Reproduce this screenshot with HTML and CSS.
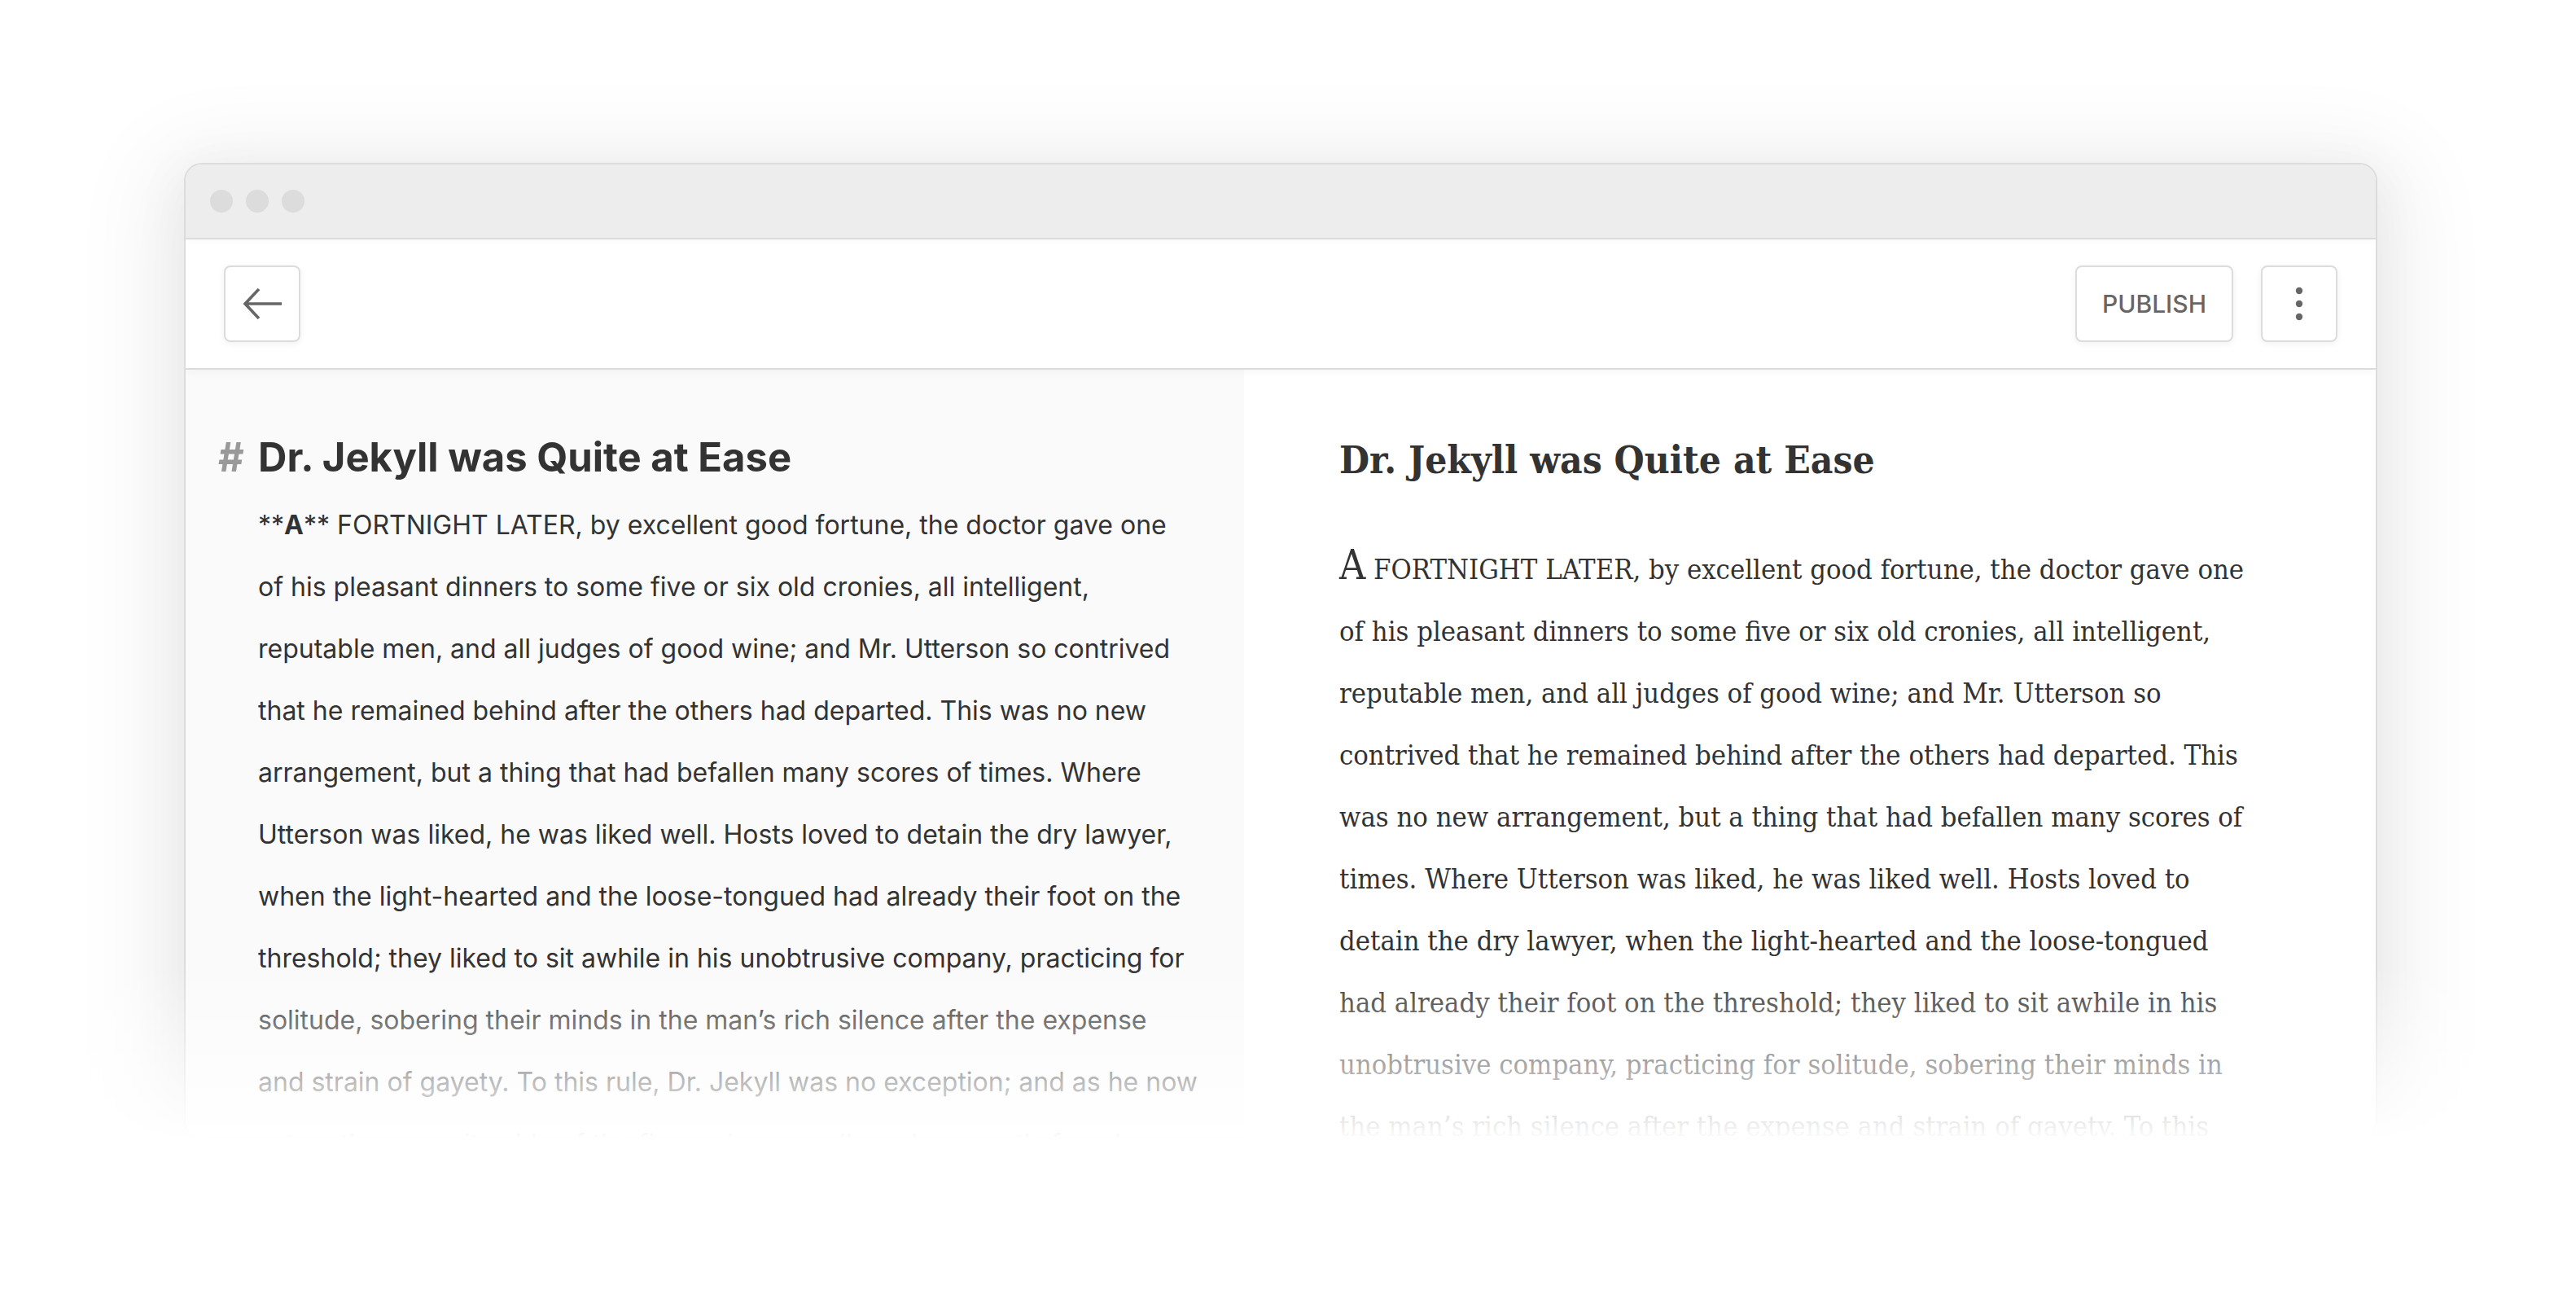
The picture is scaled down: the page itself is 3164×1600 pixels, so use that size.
FILE: index.html
```html
<!DOCTYPE html>
<html lang="en">
<head>
<meta charset="utf-8">
<title>Dr. Jekyll was Quite at Ease</title>
<link rel="stylesheet" href="styles.css">
</head>
<body>
<div class="stage">
  <div class="window">
    <div class="titlebar">
      <span class="dot"></span>
      <span class="dot"></span>
      <span class="dot"></span>
    </div>
    <div class="toolbar">
      <button class="btn btn-icon" aria-label="Back">
        <svg width="48" height="40" viewBox="0 0 48 40"><path d="M48 20H3M20 2L3 20L20 38" fill="none" stroke="#666" stroke-width="3.6"/></svg>
      </button>
      <div class="spacer"></div>
      <button class="btn btn-text">PUBLISH</button>
      <button class="btn btn-icon btn-more" aria-label="More">
        <svg width="10" height="42" viewBox="0 0 10 42"><circle cx="5" cy="5" r="4.2" fill="#666"/><circle cx="5" cy="21" r="4.2" fill="#666"/><circle cx="5" cy="37" r="4.2" fill="#666"/></svg>
      </button>
    </div>
    <div class="panes">
      <section class="editor">
        <h1 class="md-h1"><span class="md-hash">#</span><span>Dr. Jekyll was Quite at Ease</span></h1>
        <p class="md-body">**<b>A</b>** FORTNIGHT LATER, by excellent good fortune, the doctor gave one<br>of his pleasant dinners to some five or six old cronies, all intelligent,<br>reputable men, and all judges of good wine; and Mr. Utterson so contrived<br>that he remained behind after the others had departed. This was no new<br>arrangement, but a thing that had befallen many scores of times. Where<br>Utterson was liked, he was liked well. Hosts loved to detain the dry lawyer,<br>when the light-hearted and the loose-tongued had already their foot on the<br>threshold; they liked to sit awhile in his unobtrusive company, practicing for<br>solitude, sobering their minds in the man’s rich silence after the expense<br>and strain of gayety. To this rule, Dr. Jekyll was no exception; and as he now<br>sat on the opposite side of the fire—a large, well-made, smooth-faced man</p>
      </section>
      <article class="preview">
        <h1 class="pv-h1">Dr. Jekyll was Quite at Ease</h1>
        <p class="pv-body"><span class="drop">A</span> FORTNIGHT LATER, by excellent good fortune, the doctor gave one<br>of his pleasant dinners to some five or six old cronies, all intelligent,<br>reputable men, and all judges of good wine; and Mr. Utterson so<br>contrived that he remained behind after the others had departed. This<br>was no new arrangement, but a thing that had befallen many scores of<br>times. Where Utterson was liked, he was liked well. Hosts loved to<br>detain the dry lawyer, when the light-hearted and the loose-tongued<br>had already their foot on the threshold; they liked to sit awhile in his<br>unobtrusive company, practicing for solitude, sobering their minds in<br>the man’s rich silence after the expense and strain of gayety. To this</p>
      </article>
    </div>
  </div>
  <div class="fade"></div>
</div>
</body>
</html>
```

FILE: styles.css
```css
html, body {
  margin: 0;
  background: #ffffff;
}

.stage {
  position: relative;
  width: 3164px;
  height: 1600px;
  box-sizing: border-box;
  padding: 200px 0 0 226px;
  overflow: hidden;
}

.window {
  width: 2694px;
  height: 1198px;
  box-sizing: border-box;
  border: 2px solid #dcdcdc;
  border-radius: 22px;
  background: #ffffff;
  overflow: hidden;
  display: flex;
  flex-direction: column;
  box-shadow: 0 12px 60px 10px rgba(0, 0, 0, 0.045), 0 24px 110px 40px rgba(0, 0, 0, 0.06);
}

.titlebar {
  flex: 0 0 90px;
  background: #ededed;
  border-bottom: 2px solid #dcdcdc;
  display: flex;
  align-items: center;
  gap: 16px;
  padding-left: 30px;
  position: relative;
  z-index: 2;
  box-shadow: 0 2px 8px rgba(0, 0, 0, 0.03);
}

.dot {
  width: 28px;
  height: 28px;
  border-radius: 50%;
  background: #dcdcdc;
}

.toolbar {
  flex: 0 0 158px;
  display: flex;
  align-items: center;
  padding: 0 47px;
  background: #ffffff;
  border-bottom: 2px solid #dcdcdc;
  position: relative;
  z-index: 1;
  box-shadow: 0 3px 10px rgba(0, 0, 0, 0.035);
}

.spacer {
  flex: 1;
}

.btn {
  height: 94px;
  box-sizing: border-box;
  border: 2px solid #dcdcdc;
  border-radius: 8px;
  background: #ffffff;
  box-shadow: 0 2px 8px rgba(0, 0, 0, 0.06);
  display: flex;
  align-items: center;
  justify-content: center;
  padding: 0;
  margin: 0;
  cursor: pointer;
}

.btn-icon {
  width: 94px;
}

.btn-text {
  padding: 0 31px;
  font-family: Inter, "Liberation Sans", sans-serif;
  font-weight: 500;
  font-size: 30px;
  color: #666666;
}

.btn-more {
  margin-left: 34px;
}

.panes {
  flex: 1;
  display: flex;
  min-height: 0;
}

.editor {
  flex: 0 0 1300px;
  box-sizing: border-box;
  background: #fafafa;
  padding: 79px 0 0 89px;
  overflow: hidden;
}

.md-h1 {
  display: flex;
  margin: 0 0 0 -49px;
  font-family: Inter, "Liberation Sans", sans-serif;
  font-weight: 700;
  font-size: 49px;
  line-height: 58px;
  color: #333333;
}

.md-hash {
  width: 49px;
  color: #999999;
}

.md-body {
  margin: 16px 0 0;
  font-family: Inter, "Liberation Sans", sans-serif;
  font-size: 32px;
  line-height: 76px;
  color: #333333;
  white-space: nowrap;
}

.md-body b {
  font-weight: 700;
}

.preview {
  flex: 1;
  box-sizing: border-box;
  padding: 81px 0 0 117px;
  overflow: hidden;
}

.pv-h1 {
  margin: 0;
  font-family: "DejaVu Serif", "Liberation Serif", serif;
  font-stretch: semi-condensed;
  font-weight: 700;
  font-size: 47.5px;
  line-height: 58px;
  color: #333333;
}

.pv-body {
  margin: 68px 0 0;
  font-family: "DejaVu Serif", "Liberation Serif", serif;
  font-stretch: semi-condensed;
  font-size: 34.3px;
  line-height: 76px;
  color: #333333;
  white-space: nowrap;
}

.drop {
  font-size: 1.45em;
  line-height: 0;
}

.fade {
  position: absolute;
  left: 0;
  right: 0;
  top: 1185px;
  height: 415px;
  pointer-events: none;
  background: linear-gradient(to bottom, rgba(255, 255, 255, 0) 0, #ffffff 215px, rgba(255, 255, 255, 0.92) 415px);
}
```
